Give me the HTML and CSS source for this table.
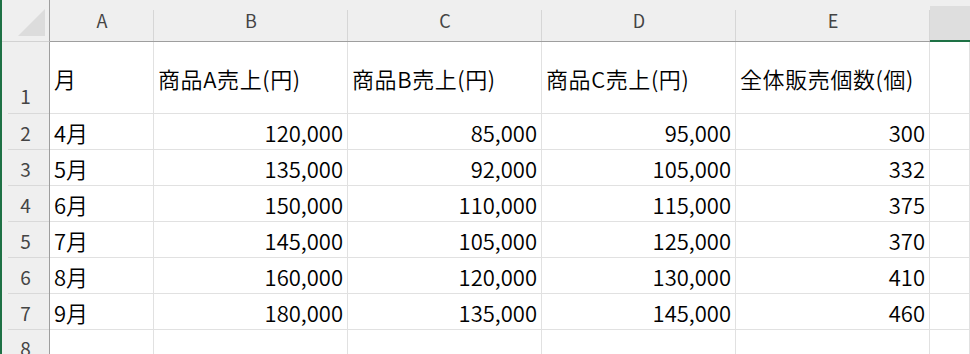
FILE: index.html
```html
<!DOCTYPE html>
<html lang="ja">
<head>
<meta charset="utf-8">
<title>Sheet</title>
<link rel="stylesheet" href="styles.css">
</head>
<body>
<div class="sheet">
  <div class="bar"></div>
  <div class="grid">
    <div class="corner"><svg class="tri" width="48" height="42" viewBox="0 0 48 42"><polygon points="16,36 43,36 43,9" fill="#dcdcdc"/></svg></div>
    <div class="ch">A</div><div class="ch">B</div><div class="ch">C</div><div class="ch">D</div><div class="ch">E</div><div class="ch sel"></div>

    <div class="rh first">1</div>
    <div class="c h">月</div><div class="c h">商品A売上(円)</div><div class="c h">商品B売上(円)</div><div class="c h">商品C売上(円)</div><div class="c h">全体販売個数(個)</div><div class="c"></div>

    <div class="rh">2</div>
    <div class="c">4月</div><div class="c n">120,000</div><div class="c n">85,000</div><div class="c n">95,000</div><div class="c n">300</div><div class="c"></div>

    <div class="rh">3</div>
    <div class="c">5月</div><div class="c n">135,000</div><div class="c n">92,000</div><div class="c n">105,000</div><div class="c n">332</div><div class="c"></div>

    <div class="rh">4</div>
    <div class="c">6月</div><div class="c n">150,000</div><div class="c n">110,000</div><div class="c n">115,000</div><div class="c n">375</div><div class="c"></div>

    <div class="rh">5</div>
    <div class="c">7月</div><div class="c n">145,000</div><div class="c n">105,000</div><div class="c n">125,000</div><div class="c n">370</div><div class="c"></div>

    <div class="rh">6</div>
    <div class="c">8月</div><div class="c n">160,000</div><div class="c n">120,000</div><div class="c n">130,000</div><div class="c n">410</div><div class="c"></div>

    <div class="rh">7</div>
    <div class="c">9月</div><div class="c n">180,000</div><div class="c n">135,000</div><div class="c n">145,000</div><div class="c n">460</div><div class="c"></div>

    <div class="rh last">8</div>
    <div class="c"></div><div class="c"></div><div class="c"></div><div class="c"></div><div class="c"></div><div class="c"></div>
  </div>
</div>
</body>
</html>
```
FILE: styles.css
```css
html, body {
  margin: 0;
  padding: 0;
  background: #ffffff;
  overflow: hidden;
}
.sheet {
  display: flex;
  width: 970px;
  height: 354px;
  overflow: hidden;
  font-family: "Noto Sans CJK JP", "Noto Sans", sans-serif;
}
.bar {
  width: 2px;
  flex: none;
  background: #1e7145;
}
.grid {
  flex: 1;
  display: grid;
  grid-template-columns: 48px 104px 194px 194px 194px 194px 1fr;
  grid-template-rows: 42px 72px repeat(6, 36px) 1fr;
}
.grid > div {
  box-sizing: border-box;
  min-width: 0;
}
.corner {
  background: #efefef;
  border-bottom: 1px solid #d2d2d2;
  border-right: 1px solid #9e9e9e;
}
.tri {
  display: block;
}
.ch {
  background: linear-gradient(#d6d6d6, #d6d6d6) right bottom / 1px 31px no-repeat, #efefef;
  border-bottom: 1px solid #9e9e9e;
  display: flex;
  align-items: center;
  justify-content: center;
  padding-bottom: 2px;
  font-size: 18px;
  color: #444444;
}
.ch.sel {
  background: linear-gradient(#efefef 0 6px, #dedede 6px);
  border-bottom: 2px solid #1e7145;
}
.rh {
  background: linear-gradient(#d9d9d9, #d9d9d9) right bottom / 41px 1px no-repeat, #efefef;
  border-right: 1px solid #9e9e9e;
  display: flex;
  align-items: center;
  justify-content: center;
  font-size: 19px;
  color: #444444;
}
.rh.first {
  align-items: flex-end;
  padding-bottom: 5px;
}
.rh.last {
  align-items: flex-start;
  padding-top: 4px;
}
.c {
  border-right: 1px solid #e1e1e1;
  border-bottom: 1px solid #e1e1e1;
  display: flex;
  align-items: center;
  padding: 0 4px 0 4px;
  font-size: 22px;
  font-weight: 350;
  color: #000000;
  white-space: nowrap;
}
.c.h {
  letter-spacing: 0.6px;
}
.c.n {
  justify-content: flex-end;
}
```
